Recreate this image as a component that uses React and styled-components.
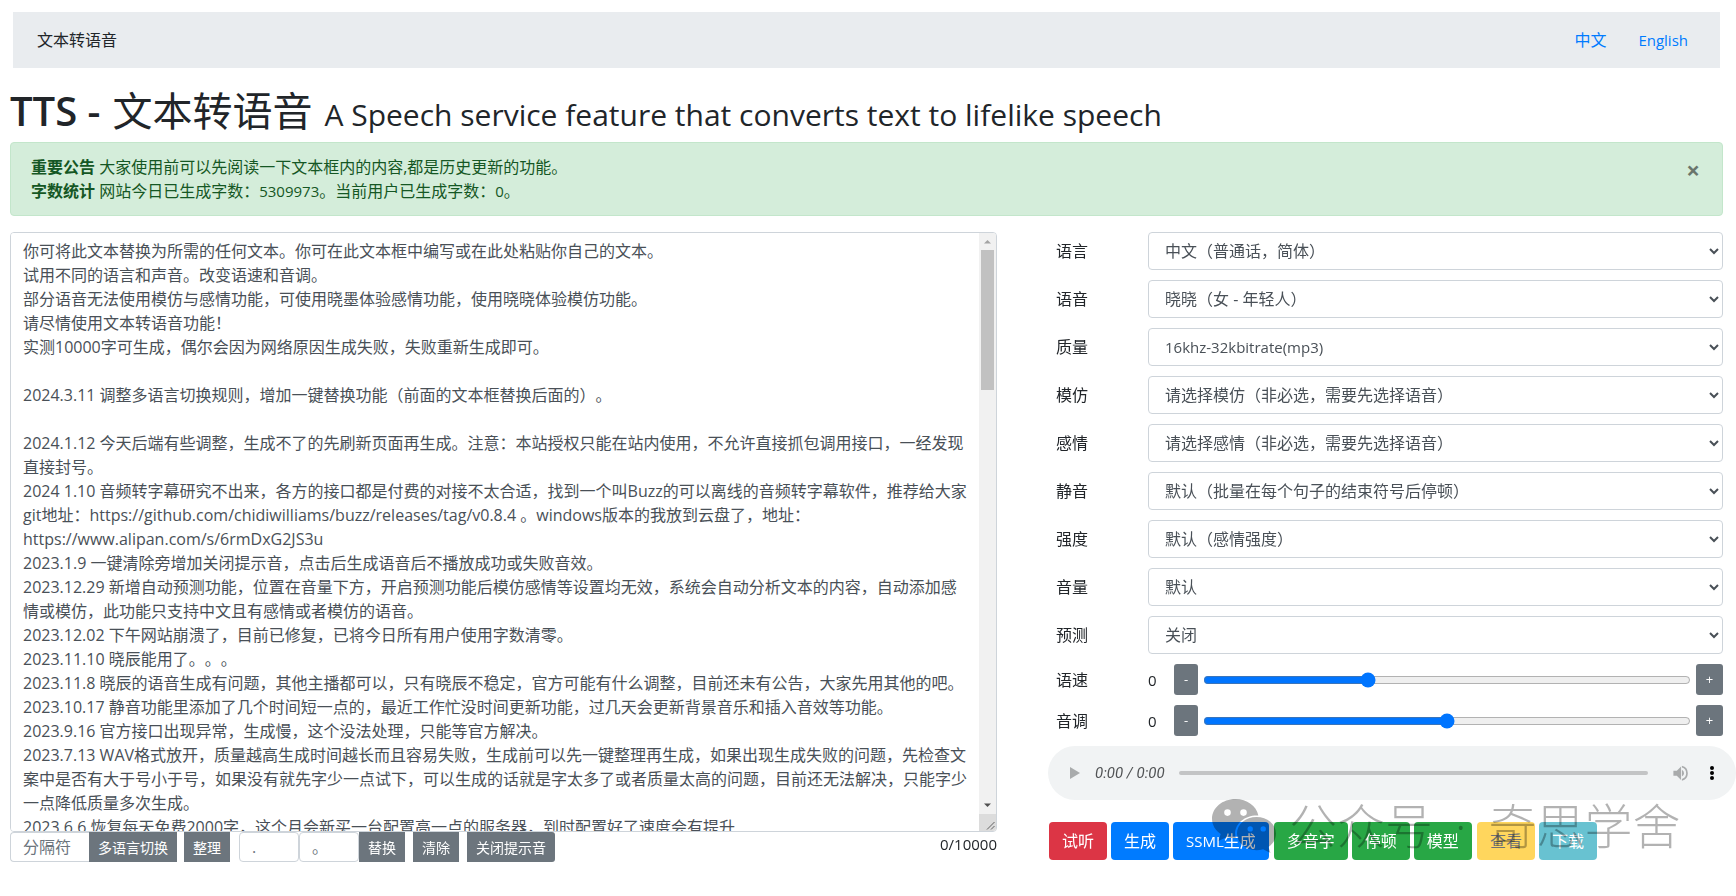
import React, { useState } from "react";
import styled, { createGlobalStyle } from "styled-components";

const GlobalStyle = createGlobalStyle`
  *, *::before, *::after { box-sizing: border-box; }
  body {
    margin: 0;
    background: #fff;
    color: #212529;
    font-family: "Open Sans", "Noto Sans CJK SC", sans-serif;
    font-size: 16px;
    line-height: 24px;
    text-spacing-trim: space-all;
  }
  button, input, select, textarea { font-family: inherit; margin: 0; }
`;

const Page = styled.div`
  padding: 12px 13px 0 10px;
`;

const Nav = styled.nav`
  display: flex;
  align-items: center;
  justify-content: space-between;
  height: 56px;
  margin: 0 3px;
  padding: 0 16px 0 24px;
  background: #e9ecef;
`;

const NavLinks = styled.div`
  display: flex;
`;

const NavLink = styled.a`
  padding: 0 16px;
  color: #007bff;
  font-size: ${(p) => (p.$latin ? 15 : 16)}px;
  text-decoration: none;
`;

const Title = styled.h1`
  display: flex;
  align-items: baseline;
  gap: 12px;
  height: 48px;
  margin: 19px 0 7px;
  font-size: 40px;
  font-weight: 400;
  line-height: 48px;
  white-space: nowrap;

  b { font-weight: 600; }
  small { font-size: 30px; }
`;

const Notice = styled.div`
  display: flex;
  justify-content: space-between;
  align-items: flex-start;
  padding: 12px 20px;
  border: 1px solid #c3e6cb;
  border-radius: 4px;
  background: #d4edda;
  color: #155724;

  p { margin: 0; }
`;

const Latin = styled.span`
  font-size: 15px;
`;

const CloseButton = styled.button`
  padding: 0 2px;
  border: 0;
  background: none;
  color: #000;
  opacity: 0.5;
  font-size: 24px;
  font-weight: 700;
  line-height: 30px;
`;

const Columns = styled.main`
  display: grid;
  grid-template-columns: 987fr 675fr;
  column-gap: 51px;
  align-items: start;
  margin-top: 16px;
`;

const Editor = styled.section`
  min-width: 0;
`;

const TextFrame = styled.div`
  display: flex;
  height: 600px;
  border: 1px solid #ced4da;
  border-radius: 4px;
  overflow: hidden;
`;

const TextBox = styled.textarea`
  flex: 1;
  min-width: 0;
  padding: 6px 8px 6px 12px;
  border: 0;
  outline: 0;
  background: #fff;
  color: #495057;
  font-size: 16px;
  line-height: 24px;
  resize: none;
  overflow-y: auto;
  scrollbar-width: none;
  text-spacing-trim: space-all;
`;

const ScrollTrack = styled.div`
  display: flex;
  flex-direction: column;
  flex: 0 0 17px;
  background: #f1f1f1;

  svg { display: block; flex: none; }
`;

const ScrollThumb = styled.div`
  flex: 0 0 140px;
  margin: 0 2px;
  background: #c1c1c1;
`;

const ScrollRest = styled.div`
  flex: 1;
`;

const EditorBar = styled.div`
  display: flex;
  align-items: flex-start;
`;

const BarGroup = styled.div`
  display: flex;
  margin-right: ${(p) => p.$after || 0}px;
`;

const SmallInput = styled.input`
  width: ${(p) => p.$width}px;
  height: 30px;
  padding: 4px 12px;
  border: 1px solid #ced4da;
  border-radius: 4px;
  background: #fff;
  color: #495057;
  font-size: 16px;
  line-height: 20px;
  ${(p) => p.$joined && "border-right: 0; border-radius: 4px 0 0 4px;"}

  &::placeholder { color: #6c757d; opacity: 1; }
`;

const BarButton = styled.button`
  height: 30px;
  padding: 0 9px;
  border: 0;
  border-radius: ${(p) => (p.$last ? "0 3px 3px 0" : "0")};
  background: #6c757d;
  color: #fff;
  font-size: 14px;
  line-height: 21px;
  white-space: nowrap;
`;

const Counter = styled.output`
  margin-left: auto;
  font-size: 15px;
`;

const Settings = styled.section`
  display: grid;
  row-gap: 10px;
  min-width: 0;
`;

const Row = styled.div`
  display: flex;
  align-items: center;
`;

const RowLabel = styled.label`
  flex: 0 0 100px;
  padding-left: 8px;
`;

const Select = styled.select`
  flex: 1;
  min-width: 0;
  height: 38px;
  padding: 6px 12px;
  border: 1px solid #ced4da;
  border-radius: 4px;
  background: #fff;
  color: #495057;
  font-size: ${(p) => (p.$latin ? 15 : 16)}px;
  line-height: 24px;
  text-spacing-trim: space-all;
`;

const Amount = styled.output`
  flex: 0 0 26px;
  font-size: 15px;
`;

const StepButton = styled.button`
  width: ${(p) => (p.$wide ? 27 : 24)}px;
  height: 31px;
  padding: 0;
  border: 0;
  border-radius: 3px;
  background: #6c757d;
  color: #fff;
  font-size: 13px;
  line-height: 21px;
`;

const Slider = styled.input`
  flex: 1;
  min-width: 0;
  height: 16px;
  margin: 0 5px;
`;

const Player = styled.div`
  display: flex;
  align-items: center;
  height: 54px;
  margin-right: -13px;
  padding: 0 12px 0 16px;
  border-radius: 27px;
  background: #f1f3f4;
`;

const IconButton = styled.button`
  display: flex;
  padding: 0;
  border: 0;
  background: none;
  color: ${(p) => p.$color};

  svg { display: block; fill: currentColor; }
`;

const Time = styled.span`
  margin: 0 14px 0 9px;
  color: #505254;
  font-family: Roboto, sans-serif;
  font-size: 15px;
  font-style: italic;
  white-space: nowrap;
`;

const Timeline = styled.div`
  flex: 1;
  height: 4px;
  margin-right: 20px;
  border-radius: 2px;
  background: #c3c4c5;
`;

const Actions = styled.div`
  position: relative;
  display: flex;
  gap: 5px;
  margin-top: 12px;
  padding-left: 1px;
`;

const ActionGroup = styled.div`
  display: flex;
  gap: 4px;
`;

const tones = {
  danger: "#dc3545",
  primary: "#007bff",
  success: "#28a745",
  warning: "#ffc107",
  info: "#17a2b8",
};

const ActionButton = styled.button`
  height: 38px;
  padding: 0 13px;
  border: 0;
  border-radius: 4px;
  background: ${(p) => tones[p.$tone]};
  color: ${(p) => (p.$tone === "warning" ? "#212529" : "#fff")};
  font-size: 16px;
  line-height: 24px;
  white-space: nowrap;

  &:disabled { opacity: 0.65; }
`;

const Watermark = styled.div`
  position: absolute;
  top: -24px;
  left: 164px;
  display: flex;
  align-items: center;
  gap: 13px;
  color: #000;
  opacity: 0.3;
  font-size: 48px;
  font-weight: 300;
  line-height: 56px;
  white-space: nowrap;
  pointer-events: none;
`;

const WatermarkText = styled.div`
  display: flex;
  gap: 22px;
`;

const article = [
  "你可将此文本替换为所需的任何文本。你可在此文本框中编写或在此处粘贴你自己的文本。",
  "试用不同的语言和声音。改变语速和音调。",
  "部分语音无法使用模仿与感情功能，可使用晓墨体验感情功能，使用晓晓体验模仿功能。",
  "请尽情使用文本转语音功能！",
  "实测10000字可生成，偶尔会因为网络原因生成失败，失败重新生成即可。",
  "",
  "2024.3.11 调整多语言切换规则，增加一键替换功能（前面的文本框替换后面的）。",
  "",
  "2024.1.12 今天后端有些调整，生成不了的先刷新页面再生成。注意：本站授权只能在站内使用，不允许直接抓包调用接口，一经发现直接封号。",
  "2024 1.10 音频转字幕研究不出来，各方的接口都是付费的对接不太合适，找到一个叫Buzz的可以离线的音频转字幕软件，推荐给大家",
  "git地址：https://github.com/chidiwilliams/buzz/releases/tag/v0.8.4 。windows版本的我放到云盘了，地址：https://www.alipan.com/s/6rmDxG2JS3u",
  "2023.1.9 一键清除旁增加关闭提示音，点击后生成语音后不播放成功或失败音效。",
  "2023.12.29 新增自动预测功能，位置在音量下方，开启预测功能后模仿感情等设置均无效，系统会自动分析文本的内容，自动添加感情或模仿，此功能只支持中文且有感情或者模仿的语音。",
  "2023.12.02 下午网站崩溃了，目前已修复，已将今日所有用户使用字数清零。",
  "2023.11.10 晓辰能用了。。。",
  "2023.11.8 晓辰的语音生成有问题，其他主播都可以，只有晓辰不稳定，官方可能有什么调整，目前还未有公告，大家先用其他的吧。",
  "2023.10.17 静音功能里添加了几个时间短一点的，最近工作忙没时间更新功能，过几天会更新背景音乐和插入音效等功能。",
  "2023.9.16 官方接口出现异常，生成慢，这个没法处理，只能等官方解决。",
  "2023.7.13 WAV格式放开，质量越高生成时间越长而且容易失败，生成前可以先一键整理再生成，如果出现生成失败的问题，先检查文案中是否有大于号小于号，如果没有就先字少一点试下，可以生成的话就是字太多了或者质量太高的问题，目前还无法解决，只能字少一点降低质量多次生成。",
  "2023.6.6 恢复每天免费2000字，这个月会新买一台配置高一点的服务器，到时配置好了速度会有提升",
].join("\n");

const choices = [
  { id: "language", label: "语言", value: "中文（普通话，简体）" },
  { id: "voice", label: "语音", value: "晓晓（女 - 年轻人）" },
  { id: "quality", label: "质量", value: "16khz-32kbitrate(mp3)", latin: true },
  { id: "style", label: "模仿", value: "请选择模仿（非必选，需要先选择语音）" },
  { id: "emotion", label: "感情", value: "请选择感情（非必选，需要先选择语音）" },
  { id: "silence", label: "静音", value: "默认（批量在每个句子的结束符号后停顿）" },
  { id: "degree", label: "强度", value: "默认（感情强度）" },
  { id: "volume", label: "音量", value: "默认" },
  { id: "predict", label: "预测", value: "关闭" },
];

function RangeRow({ id, label, min, max }) {
  const [value, setValue] = useState(0);
  const step = (by) => setValue((v) => Math.min(max, Math.max(min, v + by)));
  return (
    <Row>
      <RowLabel htmlFor={id}>{label}</RowLabel>
      <Amount htmlFor={id}>{value}</Amount>
      <StepButton type="button" onClick={() => step(-1)}>-</StepButton>
      <Slider
        id={id}
        type="range"
        min={min}
        max={max}
        value={value}
        onChange={(e) => setValue(Number(e.target.value))}
      />
      <StepButton type="button" $wide onClick={() => step(1)}>+</StepButton>
    </Row>
  );
}

function ScrollBar() {
  return (
    <ScrollTrack aria-hidden="true">
      <svg width="17" height="17" viewBox="0 0 17 17">
        <path d="M5 10.500h7L8.500 7z" fill="#a3a3a3" />
      </svg>
      <ScrollThumb />
      <ScrollRest />
      <svg width="17" height="17" viewBox="0 0 17 17">
        <path d="M5 6.500h7L8.500 10z" fill="#505050" />
      </svg>
      <svg width="17" height="17" viewBox="0 0 17 17">
        <path d="M0 0h17v17H0z" fill="#dcdcdc" />
        <path d="M8 15.500 15.500 8M12 15.500 15.500 12" stroke="#606060" fill="none" />
      </svg>
    </ScrollTrack>
  );
}

function ChatLogo() {
  return (
    <svg width="64" height="54" viewBox="0 0 64 54" aria-hidden="true">
      <path
        fillRule="evenodd"
        d="M23.500 0C10.500 0 0 8.800 0 19.800c0 6.200 3.400 11.700 8.700 15.300L6.500 42l8.200-4.100c2.900.8 5.900 1.300 9.100 1.200-.5-1.500-.7-3-.7-4.600 0-10 9.700-18.100 21.600-18.100h1.700C44.400 7 34.900 0 23.500 0ZM15.500 10.300a3.300 3.300 0 1 1 0 6.600 3.300 3.300 0 0 1 0-6.600Zm16 0a3.300 3.300 0 1 1 0 6.600 3.300 3.300 0 0 1 0-6.600Z"
      />
      <path
        fillRule="evenodd"
        d="M44.500 18C33.700 18 25 25.300 25 34.600s8.700 16.700 19.500 16.700c2.300 0 4.500-.4 6.600-1l7.400 3.700-2-5.900c4.600-3.100 7.500-7.900 7.500-13.500C64 25.300 55.300 18 44.500 18Zm-6.300 9.200a2.700 2.700 0 1 1 0 5.400 2.700 2.700 0 0 1 0-5.400Zm13 0a2.700 2.700 0 1 1 0 5.400 2.700 2.700 0 0 1 0-5.400Z"
      />
    </svg>
  );
}

export default function App() {
  const [text, setText] = useState(article);
  const [noticeOpen, setNoticeOpen] = useState(true);

  return (
    <>
      <GlobalStyle />
      <Page>
        <Nav>
          <span>文本转语音</span>
          <NavLinks>
            <NavLink href="#zh">中文</NavLink>
            <NavLink href="#en" $latin>English</NavLink>
          </NavLinks>
        </Nav>

        <Title>
          <b>TTS -</b>
          <span>文本转语音</span>
          <small>A Speech service feature that converts text to lifelike speech</small>
        </Title>

        {noticeOpen && (
          <Notice role="alert">
            <div>
              <p><strong>重要公告</strong> 大家使用前可以先阅读一下文本框内的内容,都是历史更新的功能。</p>
              <p>
                <strong>字数统计</strong> 网站今日已生成字数：<Latin>5309973</Latin>。当前用户已生成字数：<Latin>0</Latin>。
              </p>
            </div>
            <CloseButton type="button" aria-label="关闭" onClick={() => setNoticeOpen(false)}>×</CloseButton>
          </Notice>
        )}

        <Columns>
          <Editor>
            <TextFrame>
              <TextBox
                aria-label="文本"
                spellCheck={false}
                value={text}
                onChange={(e) => setText(e.target.value)}
              />
              <ScrollBar />
            </TextFrame>
            <EditorBar>
              <BarGroup $after={7}>
                <SmallInput $width={79} $joined placeholder="分隔符" aria-label="分隔符" />
                <BarButton type="button">多语言切换</BarButton>
              </BarGroup>
              <BarGroup $after={9}>
                <BarButton type="button">整理</BarButton>
              </BarGroup>
              <BarGroup $after={8}>
                <SmallInput $width={60} placeholder="." aria-label="查找" />
                <SmallInput $width={60} placeholder="。" aria-label="替换为" />
                <BarButton type="button">替换</BarButton>
              </BarGroup>
              <BarGroup $after={8}>
                <BarButton type="button">清除</BarButton>
              </BarGroup>
              <BarButton type="button" $last>关闭提示音</BarButton>
              <Counter>0/10000</Counter>
            </EditorBar>
          </Editor>

          <Settings>
            {choices.map((c) => (
              <Row key={c.id}>
                <RowLabel htmlFor={c.id}>{c.label}</RowLabel>
                <Select id={c.id} $latin={c.latin}>
                  <option>{c.value}</option>
                </Select>
              </Row>
            ))}
            <RangeRow id="rate" label="语速" min={-100} max={200} />
            <RangeRow id="pitch" label="音调" min={-50} max={50} />

            <Player>
              <IconButton type="button" aria-label="播放" $color="#a9abac">
                <svg width="22" height="22" viewBox="0 0 22 22">
                  <path d="M6 5v12l10-6z" />
                </svg>
              </IconButton>
              <Time>0:00 / 0:00</Time>
              <Timeline />
              <IconButton type="button" aria-label="静音" $color="#a9abac">
                <svg width="24" height="24" viewBox="0 0 24 24">
                  <path d="M4 9v6h4l5 5V4L8 9H4zm12.500 3A4.500 4.500 0 0 0 14 7.970v8.050A4.500 4.500 0 0 0 16.500 12zM14 3.230v2.060a7 7 0 0 1 0 13.420v2.060a9 9 0 0 0 0-17.540z" transform="translate(2 2) scale(.85)" />
                </svg>
              </IconButton>
              <IconButton type="button" aria-label="更多" $color="#000">
                <svg width="32" height="16" viewBox="0 0 32 16">
                  <circle cx="20" cy="3" r="2" />
                  <circle cx="20" cy="8" r="2" />
                  <circle cx="20" cy="13" r="2" />
                </svg>
              </IconButton>
            </Player>

            <Actions>
              <ActionGroup>
                <ActionButton type="button" $tone="danger">试听</ActionButton>
                <ActionButton type="button" $tone="primary">生成</ActionButton>
                <ActionButton type="button" $tone="primary"><Latin>SSML</Latin>生成</ActionButton>
              </ActionGroup>
              <ActionGroup>
                <ActionButton type="button" $tone="success">多音字</ActionButton>
                <ActionButton type="button" $tone="success">停顿</ActionButton>
                <ActionButton type="button" $tone="success">模型</ActionButton>
              </ActionGroup>
              <ActionGroup>
                <ActionButton type="button" $tone="warning" disabled>查看</ActionButton>
                <ActionButton type="button" $tone="info" disabled>下载</ActionButton>
              </ActionGroup>
              <Watermark aria-hidden="true">
                <ChatLogo />
                <WatermarkText>
                  <span>公众号</span>
                  <span>·</span>
                  <span>奇思学舍</span>
                </WatermarkText>
              </Watermark>
            </Actions>
          </Settings>
        </Columns>
      </Page>
    </>
  );
}
